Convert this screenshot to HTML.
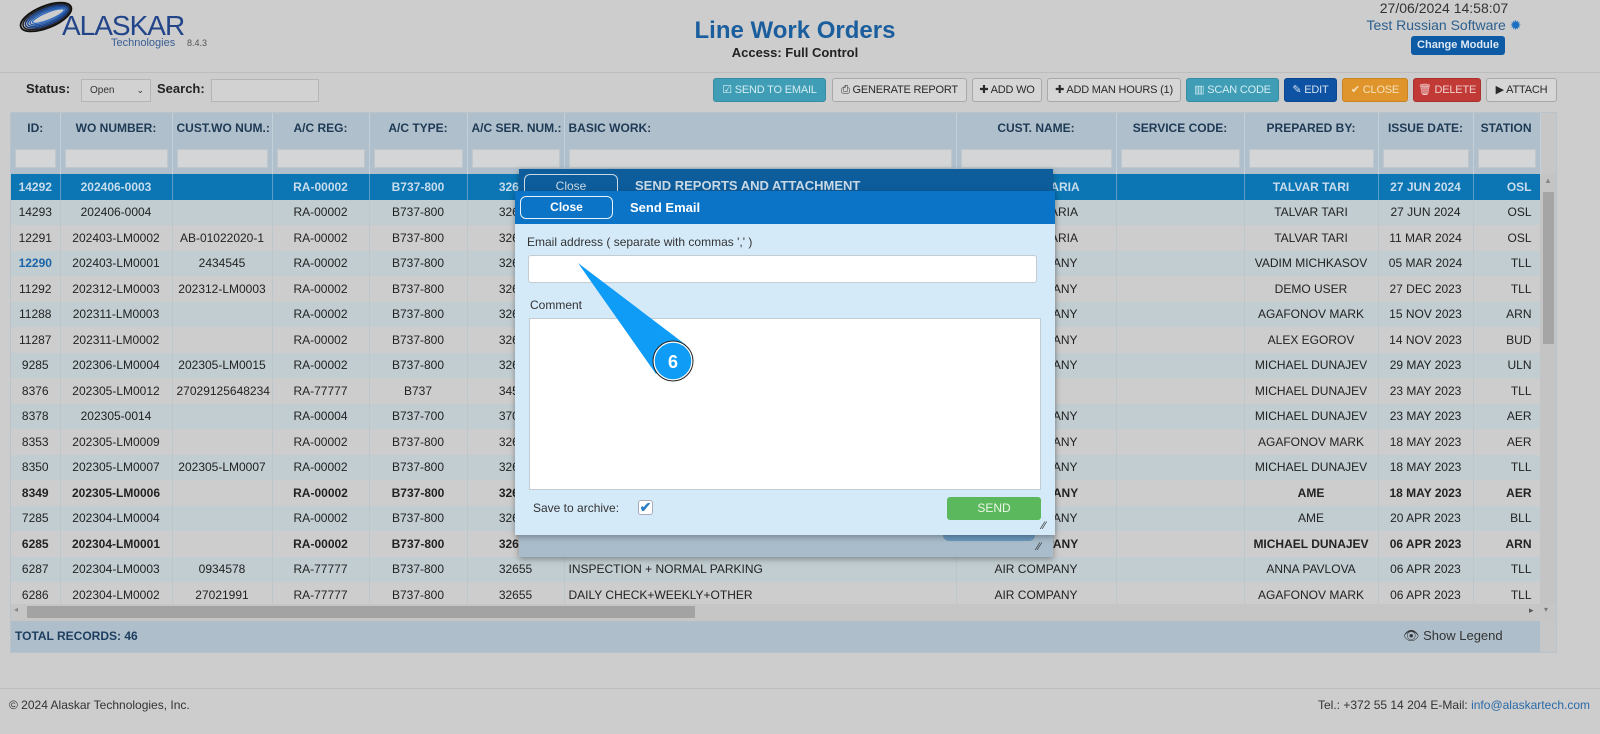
<!DOCTYPE html>
<html><head><meta charset="utf-8"><style>
*{box-sizing:border-box;margin:0;padding:0}
body{width:1600px;height:734px;background:#cdcdcd;font-family:"Liberation Sans",Arial,sans-serif;position:relative;overflow:hidden;color:#222}
.abs{position:absolute}
.btn{position:absolute;top:78px;height:24px;border-radius:3px;font-size:11px;line-height:22px;text-align:center;border:1px solid #a8a8a8;background:#d6d6d6;color:#2a2a2a;letter-spacing:-.2px;white-space:nowrap}
table{position:absolute;left:11px;top:113px;border-collapse:collapse;table-layout:fixed;width:1529px;font-size:12px}
td,th{overflow:hidden;white-space:nowrap;text-align:center;border-right:1px solid #bcc6cb;height:25.5px;padding:0 4px}
th{height:30px;background:#afc0cc;color:#1e3954;font-weight:bold;border-right:1px solid #c3d0d8}
tr.f td{height:31px;background:#afc0cc;border-right:1px solid #c3d0d8}
tr.f td div{height:19px;background:#d3d5d6;border:1px solid #c0c7cc}
tr.o td{background:#c1cdd1}
tr.e td{background:#cdcdcd}
tr.s td{background:#0b76b3;color:#c8dced;font-weight:bold;border-right:1px solid #5b9dc6}
tr.b td{font-weight:bold}
td.l{text-align:left}
td.r,th.r{text-align:right;padding-right:8px}
</style></head><body>
<!-- logo -->
<svg class="abs" style="left:6px;top:0" width="80" height="40" viewBox="0 0 80 40">
<g fill="none" transform="rotate(-22 40 17)">
<ellipse cx="40" cy="17" rx="27" ry="11" stroke="#111" stroke-width="1.8"/>
<ellipse cx="40.5" cy="17" rx="25" ry="9.5" stroke="#222" stroke-width="1.5"/>
<ellipse cx="41" cy="17" rx="23" ry="8" stroke="#1a3b7a" stroke-width="1.5"/>
<ellipse cx="41.5" cy="17" rx="21" ry="6.6" stroke="#1d4a93" stroke-width="1.4"/>
<ellipse cx="42" cy="17" rx="19" ry="5.2" stroke="#2358a8" stroke-width="1.3"/>
<ellipse cx="42.5" cy="17" rx="17" ry="3.8" stroke="#2a66bb" stroke-width="1.2"/>
</g></svg>
<div class="abs" style="left:62px;top:10px;font-size:28px;color:#22458a;letter-spacing:-1px">ALASKAR</div>
<div class="abs" style="left:111px;top:37px;font-size:11px;color:#3a5e94">Technologies</div>
<div class="abs" style="left:187px;top:38px;font-size:9px;color:#555">8.4.3</div>
<div class="abs" style="left:0;width:1590px;top:17px;text-align:center;font-size:24px;font-weight:bold;color:#1a5e9e">Line Work Orders</div>
<div class="abs" style="left:0;width:1590px;top:45px;text-align:center;font-size:13px;font-weight:bold;color:#222">Access: Full Control</div>
<div class="abs" style="left:1300px;width:288px;top:0;text-align:center;font-size:14px;color:#333">27/06/2024 14:58:07</div>
<div class="abs" style="left:1300px;width:288px;top:17px;text-align:center;font-size:14px;color:#2b5f8e">Test Russian Software <span style="color:#1a6fc0">✹</span></div>
<div class="abs" style="left:1411px;top:36px;width:94px;height:19px;background:#0d5ba5;border-radius:3px;color:#dfe9f4;font-size:11px;font-weight:bold;text-align:center;line-height:19px">Change Module</div>
<div class="abs" style="left:0;top:72px;width:1600px;height:1px;background:#bdbdbd"></div>
<div class="abs" style="left:26px;top:81px;font-size:13px;font-weight:bold;color:#222">Status:</div>
<div class="abs" style="left:81px;top:79px;width:70px;height:23px;border:1px solid #b5b5b5;background:#d2d2d2;font-size:10px;line-height:21px;padding-left:8px;color:#333">Open <span style="position:absolute;right:6px;font-size:9px">⌄</span></div>
<div class="abs" style="left:157px;top:81px;font-size:13px;font-weight:bold;color:#222">Search:</div>
<div class="abs" style="left:211px;top:79px;width:108px;height:23px;border:1px solid #b5b5b5;background:#d2d2d2"></div>
<div class="btn" style="left:713px;width:113px;background:#3f9eb6;color:#d4ecf2;border-color:#3a8ca2">☑ SEND TO EMAIL</div>
<div class="btn" style="left:832px;width:135px">⎙ GENERATE REPORT</div>
<div class="btn" style="left:972px;width:70px">✚ ADD WO</div>
<div class="btn" style="left:1047px;width:134px">✚ ADD MAN HOURS (1)</div>
<div class="btn" style="left:1186px;width:93px;background:#3f9eb6;color:#d4ecf2;border-color:#3a8ca2">▥ SCAN CODE</div>
<div class="btn" style="left:1284px;width:53px;background:#0d52a3;color:#d4e0f0;border-color:#0b4690">✎ EDIT</div>
<div class="btn" style="left:1342px;width:66px;background:#e0952c;color:#f5e0bd;border-color:#c98424">✔ CLOSE</div>
<div class="btn" style="left:1413px;width:68px;background:#c13a36;color:#f0cfce;border-color:#a8312e">🗑 DELETE</div>
<div class="btn" style="left:1486px;width:71px">▶ ATTACH</div>

<div class="abs" style="left:10px;top:112px;width:1547px;height:541px;border:1px solid #b9c3c9;background:#c7c7c7"></div>
<table>
<colgroup><col style="width:49px"><col style="width:112px"><col style="width:100px"><col style="width:97px"><col style="width:98px"><col style="width:97px"><col style="width:392px"><col style="width:160px"><col style="width:128px"><col style="width:134px"><col style="width:95px"><col style="width:67px"></colgroup>
<tr><th>ID:</th><th>WO NUMBER:</th><th>CUST.WO NUM.:</th><th>A/C REG:</th><th>A/C TYPE:</th><th>A/C SER. NUM.:</th><th style="text-align:left">BASIC WORK:</th><th>CUST. NAME:</th><th>SERVICE CODE:</th><th>PREPARED BY:</th><th>ISSUE DATE:</th><th class="r">STATION</th></tr>
<tr class="f"><td><div></div></td><td><div></div></td><td><div></div></td><td><div></div></td><td><div></div></td><td><div></div></td><td><div></div></td><td><div></div></td><td><div></div></td><td><div></div></td><td><div></div></td><td><div></div></td></tr>
<tr class="s"><td>14292</td><td>202406-0003</td><td></td><td>RA-00002</td><td>B737-800</td><td>32655</td><td class="l"></td><td>AIR BULGARIA</td><td></td><td>TALVAR TARI</td><td>27 JUN 2024</td><td class="r">OSL</td></tr>
<tr class="o"><td>14293</td><td>202406-0004</td><td></td><td>RA-00002</td><td>B737-800</td><td>32655</td><td class="l"></td><td>AIR BULGARIA</td><td></td><td>TALVAR TARI</td><td>27 JUN 2024</td><td class="r">OSL</td></tr>
<tr class="e"><td>12291</td><td>202403-LM0002</td><td>AB-01022020-1</td><td>RA-00002</td><td>B737-800</td><td>32655</td><td class="l"></td><td>AIR BULGARIA</td><td></td><td>TALVAR TARI</td><td>11 MAR 2024</td><td class="r">OSL</td></tr>
<tr class="o"><td style="color:#1a64a8;font-weight:bold">12290</td><td>202403-LM0001</td><td>2434545</td><td>RA-00002</td><td>B737-800</td><td>32655</td><td class="l"></td><td>AIR COMPANY</td><td></td><td>VADIM MICHKASOV</td><td>05 MAR 2024</td><td class="r">TLL</td></tr>
<tr class="e"><td>11292</td><td>202312-LM0003</td><td>202312-LM0003</td><td>RA-00002</td><td>B737-800</td><td>32655</td><td class="l"></td><td>AIR COMPANY</td><td></td><td>DEMO USER</td><td>27 DEC 2023</td><td class="r">TLL</td></tr>
<tr class="o"><td>11288</td><td>202311-LM0003</td><td></td><td>RA-00002</td><td>B737-800</td><td>32655</td><td class="l"></td><td>AIR COMPANY</td><td></td><td>AGAFONOV MARK</td><td>15 NOV 2023</td><td class="r">ARN</td></tr>
<tr class="e"><td>11287</td><td>202311-LM0002</td><td></td><td>RA-00002</td><td>B737-800</td><td>32655</td><td class="l"></td><td>AIR COMPANY</td><td></td><td>ALEX EGOROV</td><td>14 NOV 2023</td><td class="r">BUD</td></tr>
<tr class="o"><td>9285</td><td>202306-LM0004</td><td>202305-LM0015</td><td>RA-00002</td><td>B737-800</td><td>32655</td><td class="l"></td><td>AIR COMPANY</td><td></td><td>MICHAEL DUNAJEV</td><td>29 MAY 2023</td><td class="r">ULN</td></tr>
<tr class="e"><td>8376</td><td>202305-LM0012</td><td>27029125648234</td><td>RA-77777</td><td>B737</td><td>34567</td><td class="l"></td><td></td><td></td><td>MICHAEL DUNAJEV</td><td>23 MAY 2023</td><td class="r">TLL</td></tr>
<tr class="o"><td>8378</td><td>202305-0014</td><td></td><td>RA-00004</td><td>B737-700</td><td>37000</td><td class="l"></td><td>AIR COMPANY</td><td></td><td>MICHAEL DUNAJEV</td><td>23 MAY 2023</td><td class="r">AER</td></tr>
<tr class="e"><td>8353</td><td>202305-LM0009</td><td></td><td>RA-00002</td><td>B737-800</td><td>32655</td><td class="l"></td><td>AIR COMPANY</td><td></td><td>AGAFONOV MARK</td><td>18 MAY 2023</td><td class="r">AER</td></tr>
<tr class="o"><td>8350</td><td>202305-LM0007</td><td>202305-LM0007</td><td>RA-00002</td><td>B737-800</td><td>32655</td><td class="l"></td><td>AIR COMPANY</td><td></td><td>MICHAEL DUNAJEV</td><td>18 MAY 2023</td><td class="r">TLL</td></tr>
<tr class="e b"><td>8349</td><td>202305-LM0006</td><td></td><td>RA-00002</td><td>B737-800</td><td>32655</td><td class="l"></td><td>AIR COMPANY</td><td></td><td>AME</td><td>18 MAY 2023</td><td class="r">AER</td></tr>
<tr class="o"><td>7285</td><td>202304-LM0004</td><td></td><td>RA-00002</td><td>B737-800</td><td>32655</td><td class="l"></td><td>AIR COMPANY</td><td></td><td>AME</td><td>20 APR 2023</td><td class="r">BLL</td></tr>
<tr class="e b"><td>6285</td><td>202304-LM0001</td><td></td><td>RA-00002</td><td>B737-800</td><td>32655</td><td class="l"></td><td>AIR COMPANY</td><td></td><td>MICHAEL DUNAJEV</td><td>06 APR 2023</td><td class="r">ARN</td></tr>
<tr class="o"><td>6287</td><td>202304-LM0003</td><td>0934578</td><td>RA-77777</td><td>B737-800</td><td>32655</td><td class="l">INSPECTION + NORMAL PARKING</td><td>AIR COMPANY</td><td></td><td>ANNA PAVLOVA</td><td>06 APR 2023</td><td class="r">TLL</td></tr>
<tr class="e"><td>6286</td><td>202304-LM0002</td><td>27021991</td><td>RA-77777</td><td>B737-800</td><td>32655</td><td class="l">DAILY CHECK+WEEKLY+OTHER</td><td>AIR COMPANY</td><td></td><td>AGAFONOV MARK</td><td>06 APR 2023</td><td class="r">TLL</td></tr>
</table>
<div class="abs" style="left:1540px;top:174px;width:16px;height:430px;background:#c4c4c4"></div>
<div class="abs" style="left:1543px;top:192px;width:11px;height:152px;background:#a5a5a5"></div>
<div class="abs" style="left:1544px;top:176px;font-size:8px;color:#888">▲</div>
<div class="abs" style="left:11px;top:604px;width:1545px;height:17px;background:#c6c6c6"></div>
<div class="abs" style="left:27px;top:606px;width:668px;height:12px;background:#a3a3a3"></div>
<div class="abs" style="left:14px;top:605px;font-size:8px;color:#888">◂</div>
<div class="abs" style="left:1529px;top:605px;font-size:9px;color:#555">▸</div>
<div class="abs" style="left:1544px;top:605px;font-size:8px;color:#777">▾</div>
<div class="abs" style="left:11px;top:621px;width:1529px;height:31px;background:#aebfcb"></div>
<div class="abs" style="left:15px;top:629px;font-size:12px;font-weight:bold;color:#1e3e60">TOTAL RECORDS: 46</div>
<div class="abs" style="left:1403px;top:628px;font-size:13px;color:#333">👁 Show Legend</div>
<div class="abs" style="left:0;top:688px;width:1600px;height:1px;background:#bdbdbd"></div>
<div class="abs" style="left:9px;top:698px;font-size:12px;color:#333">© 2024 Alaskar Technologies, Inc.</div>
<div class="abs" style="right:10px;top:698px;font-size:12px;color:#333">Tel.: +372 55 14 204 E-Mail: <span style="color:#2a6aa8">info@alaskartech.com</span></div>

<div class="abs" style="left:519px;top:169px;width:534px;height:388px;background:#a8bccb;box-shadow:0 2px 6px rgba(0,0,0,.35)"></div>
<div class="abs" style="left:519px;top:169px;width:534px;height:31px;background:#0d5d9c"></div>
<div class="abs" style="left:524px;top:174px;width:94px;height:24px;border:1px solid #c9d9e6;border-radius:6px;color:#c9d9e6;font-size:12px;text-align:center;line-height:22px">Close</div>
<div class="abs" style="left:635px;top:178px;font-size:13px;font-weight:bold;color:#c9d9e6">SEND REPORTS AND ATTACHMENT</div>
<div class="abs" style="left:943px;top:534px;width:92px;height:7px;background:#6b98bd;border-radius:0 0 6px 6px"></div>
<div class="abs" style="left:1037px;top:541px;font-size:11px;color:#333">⁄⁄</div>
<div class="abs" style="left:515px;top:191px;width:540px;height:344px;background:#d5eaf9;box-shadow:0 2px 6px rgba(0,0,0,.3)"></div>
<div class="abs" style="left:515px;top:191px;width:540px;height:33px;background:#0b74c6"></div>
<div class="abs" style="left:520px;top:196px;width:93px;height:23px;border:1px solid #e8f0f8;border-radius:6px;color:#fff;font-size:12px;font-weight:bold;text-align:center;line-height:21px">Close</div>
<div class="abs" style="left:630px;top:200px;font-size:13px;font-weight:bold;color:#fff">Send Email</div>
<div class="abs" style="left:527px;top:235px;font-size:12px;color:#333">Email address ( separate with commas ',' )</div>
<div class="abs" style="left:528px;top:255px;width:509px;height:28px;background:#fff;border:1px solid #c4ccd2;border-radius:3px"></div>
<div class="abs" style="left:530px;top:298px;font-size:12px;color:#333">Comment</div>
<div class="abs" style="left:529px;top:318px;width:512px;height:172px;background:#fff;border:1px solid #c4ccd2"></div>
<div class="abs" style="left:533px;top:501px;font-size:12px;color:#333">Save to archive:</div>
<div class="abs" style="left:638px;top:500px;width:15px;height:15px;background:#fff;border:1px solid #aab;border-radius:3px;color:#2f7fc4;font-size:14px;line-height:13px;text-align:center;font-weight:bold">✔</div>
<div class="abs" style="left:947px;top:497px;width:94px;height:23px;background:#5cb85c;border-radius:3px;color:#eaf6ea;font-size:12px;text-align:center;line-height:23px">SEND</div>
<div class="abs" style="left:1042px;top:520px;font-size:11px;color:#333">⁄⁄</div>
<svg class="abs" style="left:0;top:0" width="1600" height="734">
<polygon points="578,263 686,345 656,374" fill="#0e9cf6"/>
<circle cx="673" cy="361" r="19" fill="#0e9cf6" stroke="#fff" stroke-width="1.5"/>
<circle cx="673" cy="361" r="20" fill="none" stroke="#222" stroke-width="1"/>
<text x="673" y="368" text-anchor="middle" font-family="Liberation Sans, sans-serif" font-weight="bold" font-size="18" fill="#fff">6</text>
</svg>
</body></html>
